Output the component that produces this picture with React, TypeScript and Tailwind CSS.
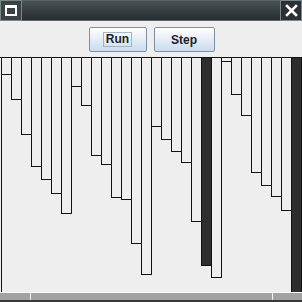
import React from 'react'

// bottom y (page px) of each hanging bar, dark = currently compared pair
const bars: { bottom: number; dark?: boolean }[] = [
  { bottom: 74 }, { bottom: 99 }, { bottom: 134 }, { bottom: 166 }, { bottom: 179 },
  { bottom: 193 }, { bottom: 213 }, { bottom: 86 }, { bottom: 105 }, { bottom: 155 },
  { bottom: 164 }, { bottom: 197 }, { bottom: 199 }, { bottom: 243 }, { bottom: 274 },
  { bottom: 126 }, { bottom: 139 }, { bottom: 151 }, { bottom: 162 }, { bottom: 221 },
  { bottom: 265, dark: true }, { bottom: 277 }, { bottom: 61 }, { bottom: 94 }, { bottom: 115 },
  { bottom: 172 }, { bottom: 185 }, { bottom: 196 }, { bottom: 210 }, { bottom: 292, dark: true },
]

const TOP = 57

function TitleBar() {
  return (
    <div className="flex h-[22px] w-full bg-gradient-to-b from-[#4b5357] to-[#262c2f] border-b border-[#f0f0f0]">
      <div className="flex h-full w-[22px] items-center justify-center border border-[#7c8588] bg-[#3b4245]">
        <div className="h-[11px] w-[12px] border-2 border-t-[3px] border-white" />
      </div>
      <div className="flex-1 border-y border-[#5b6366]" />
      <div className="flex h-full w-[22px] items-center justify-center border border-[#7c8588] bg-[#2a3033]">
        <svg width="13" height="13" viewBox="0 0 13 13">
          <path d="M2 2 L11 11 M11 2 L2 11" stroke="white" strokeWidth="2.6" strokeLinecap="square" />
        </svg>
      </div>
    </div>
  )
}

function Btn({ label, focused, w }: { label: string; focused?: boolean; w: string }) {
  return (
    <button
      className={`flex h-[25px] ${w} items-center justify-center rounded-[2px] border border-[#7f90a3] bg-gradient-to-b from-white to-[#c9dbec] text-[12px] font-bold text-[#222] [font-family:'Liberation_Sans',Arial,sans-serif]`}
    >
      <span className={focused ? 'border border-[#a3b4c6] px-[2px] leading-[11px] py-[1px]' : 'px-[3px]'}>{label}</span>
    </button>
  )
}

export default function App() {
  return (
    <div className="flex h-[302px] w-[302px] flex-col overflow-hidden bg-[#eeeeee]">
      <TitleBar />
      <div className="flex h-[35px] items-start justify-center gap-[7px] pt-[5px] pl-[1px]">
        <Btn label="Run" focused w="w-[58px]" />
        <Btn label="Step" w="w-[61px]" />
      </div>
      <svg width="302" height="235" className="block">
        <line x1="0" y1="0.5" x2="302" y2="0.5" stroke="#111" />
        <line x1="1.5" y1="0" x2="1.5" y2="235" stroke="#111" />
        {bars.map((b, i) => (
          <rect
            key={i}
            x={1.5 + i * 10}
            y={0.5}
            width={10}
            height={b.bottom - TOP}
            fill={b.dark ? '#2e2e2e' : '#eeeeee'}
            stroke="#111"
          />
        ))}
      </svg>
      <div className="flex h-[10px] flex-col">
        <div className="h-[1px] bg-[#fafafa]" />
        <div className="flex h-[7px] bg-[#a2a2a2]">
          <div className="w-[30px]" />
          <div className="w-[1px] bg-[#f4f4f4]" />
          <div className="w-[241px]" />
          <div className="w-[1px] bg-[#f4f4f4]" />
        </div>
        <div className="h-[2px] bg-[#3a3a3a]" />
      </div>
    </div>
  )
}
